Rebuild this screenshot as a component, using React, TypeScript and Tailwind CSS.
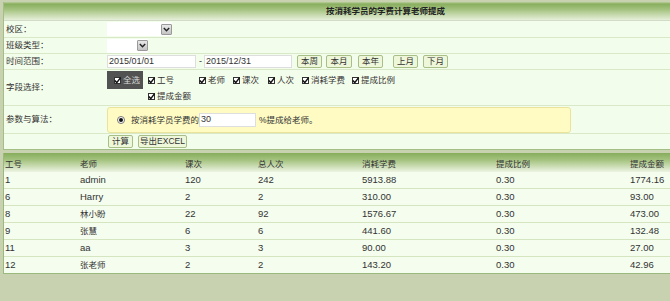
const cjkRe = /[\u4e00-\u9fff]/;

function Check() {
  return (
    <span className="inline-flex w-[7px] h-[7px] border border-[#333] bg-white shrink-0 items-center justify-center">
      <svg width="7" height="7" viewBox="0 0 7 7" className="overflow-visible">
        <path d="M0.8 3.4 L2.8 5.6 L6.6 0.6" fill="none" stroke="#111" strokeWidth="1.5" />
      </svg>
    </span>
  );
}

function Field({ label, className = "" }: { label: string; className?: string }) {
  return (
    <span className={"flex items-center gap-[2px] " + className}>
      <Check />
      <span className="text-[8.5px] leading-none">{label}</span>
    </span>
  );
}

function Btn({ children, className = "" }: { children: React.ReactNode; className?: string }) {
  return (
    <span
      className={
        "flex h-[13px] items-center justify-center rounded-[2px] border border-[#a8bf88] bg-[#eef7da] text-[8.5px] leading-none text-[#333] " +
        className
      }
    >
      {children}
    </span>
  );
}

function Select({ w }: { w: string }) {
  return (
    <span className={"flex h-[14px] items-center justify-end bg-white pr-[0px] " + w}>
      <span className="flex h-[11px] w-[11px] items-center justify-center rounded-[1px] border border-[#9a9a9a] bg-[linear-gradient(#e8e8e8,#c4c4c4)]">
        <svg width="7" height="5" viewBox="0 0 7 5">
          <path d="M0.8 1 L3.5 3.8 L6.2 1" fill="none" stroke="#222" strokeWidth="1.4" />
        </svg>
      </span>
    </span>
  );
}

const rows = [
  ["1", "admin", "120", "242", "5913.88", "0.30", "1774.16"],
  ["6", "Harry", "2", "2", "310.00", "0.30", "93.00"],
  ["8", "林小盼", "22", "92", "1576.67", "0.30", "473.00"],
  ["9", "张慧", "6", "6", "441.60", "0.30", "132.48"],
  ["11", "aa", "3", "3", "90.00", "0.30", "27.00"],
  ["12", "张老师", "2", "2", "143.20", "0.30", "42.96"],
];
const heads = ["工号", "老师", "课次", "总人次", "消耗学费", "提成比例", "提成金额"];
const colW = ["w-[76px] pl-[1px]", "w-[105px]", "w-[73px]", "w-[104px]", "w-[134px]", "w-[134px]", "flex-1"];

export default function App() {
  return (
    <div className="w-[670px] h-[301px] overflow-hidden bg-[#c8d2b1] pt-[2px] pl-[3px] font-['Liberation_Sans','Noto_Sans_CJK_SC',sans-serif] text-[#333]">
      {/* query panel */}
      <div className="border-l border-b border-[#a4bf86] bg-[#f3fdeb]">
        <div className="flex h-[19px] items-center border-b border-[#d2dbc5] bg-[linear-gradient(to_bottom,#bcd0a0_0px,#88ae5d_2px,#a8c584_45%,#e6efda)] pl-[322px] text-[8.5px] font-bold text-[#222]">
          按消耗学员的学费计算老师提成
        </div>

        <div className="flex h-[17px] items-center border-b border-[#d9e8c6]">
          <span className="w-[103px] pl-[2px] text-[8.5px]">校区：</span>
          <Select w="w-[65px]" />
        </div>

        <div className="flex h-[16px] items-center border-b border-[#d9e8c6]">
          <span className="w-[103px] pl-[2px] text-[8.5px]">班级类型：</span>
          <Select w="w-[41px]" />
        </div>

        <div className="flex h-[16px] items-center border-b border-[#d9e8c6]">
          <span className="w-[103px] pl-[2px] text-[8.5px]">时间范围：</span>
          <span className="flex h-[13px] w-[89px] items-center border border-[#dedede] bg-white pl-[1px] text-[9px]">2015/01/01</span>
          <span className="w-[8px] pl-[3px] text-[9px]">-</span>
          <span className="flex h-[13px] w-[88px] items-center border border-[#dedede] bg-white pl-[1px] text-[9px]">2015/12/31</span>
          <Btn className="ml-[5px] w-[25px]">本周</Btn>
          <Btn className="ml-[4px] w-[26px]">本月</Btn>
          <Btn className="ml-[6px] w-[25px]">本年</Btn>
          <Btn className="ml-[10px] w-[25px]">上月</Btn>
          <Btn className="ml-[5px] w-[25px]">下月</Btn>
        </div>

        <div className="flex h-[36px] border-b border-[#d9e8c6]">
          <span className="flex w-[103px] items-center pl-[2px] text-[8.5px]">字段选择：</span>
          <span className="mt-[1px] flex h-[18px] w-[36px] items-center gap-[2px] bg-[#525252] pl-[7px]">
            <Check />
            <span className="text-[8.5px] leading-none text-[#d8d8d8]">全选</span>
          </span>
          <div className="ml-[5px] flex flex-col">
            <div className="mt-[5px] flex h-[10px] items-center">
              <Field label="工号" className="w-[51px]" />
              <Field label="老师" className="w-[34px]" />
              <Field label="课次" className="w-[35px]" />
              <Field label="人次" className="w-[34px]" />
              <Field label="消耗学费" className="w-[50px]" />
              <Field label="提成比例" />
            </div>
            <div className="mt-[6px] flex h-[10px] items-center">
              <Field label="提成金额" />
            </div>
          </div>
        </div>

        <div className="flex h-[28px] border-b border-[#d9e8c6]">
          <span className="flex w-[103px] items-center pl-[2px] text-[8.5px]">参数与算法：</span>
          <div className="mt-[1px] flex h-[26px] w-[464px] items-center rounded-[3px] border border-[#e9e39c] bg-[#fffbc3] pl-[9px]">
            <span className="flex h-[8px] w-[8px] items-center justify-center rounded-full border border-[#777] bg-white">
              <span className="h-[4px] w-[4px] rounded-full bg-[#111]" />
            </span>
            <span className="ml-[6px] text-[8.5px]">按消耗学员学费的</span>
            <span className="flex h-[14px] w-[57px] items-center border border-[#dedede] bg-white pl-[1px] text-[9px]">30</span>
            <span className="ml-[3px] text-[8.5px]">%提成给老师。</span>
          </div>
        </div>

        <div className="flex h-[15px] items-center pl-[104px]">
          <Btn className="w-[25px]">计算</Btn>
          <Btn className="ml-[5px] w-[49px]">导出EXCEL</Btn>
        </div>
      </div>

      {/* result table */}
      <div className="mt-[3px] border-l border-[#9ab97c]">
        <div className="flex h-[19px] items-center bg-[linear-gradient(to_bottom,#86ad5a,#a8c584_40%,#edf4e3)] pt-[3px] text-[8.5px] text-[#333]">
          {heads.map((h, i) => (
            <span key={h} className={colW[i]}>
              {h}
            </span>
          ))}
        </div>
        {rows.map((r, ri) => (
          <div
            key={ri}
            className={
              "flex h-[17px] items-center bg-[#f4fdee] " +
              (ri === rows.length - 1 ? "border-b border-[#9ab97c]" : "border-b border-[#d5e5c0]")
            }
          >
            {r.map((c, i) => (
              <span key={i} className={colW[i] + (cjkRe.test(c) ? " text-[8.5px]" : " text-[9.5px]")}>
                {c}
              </span>
            ))}
          </div>
        ))}
      </div>
    </div>
  );
}
